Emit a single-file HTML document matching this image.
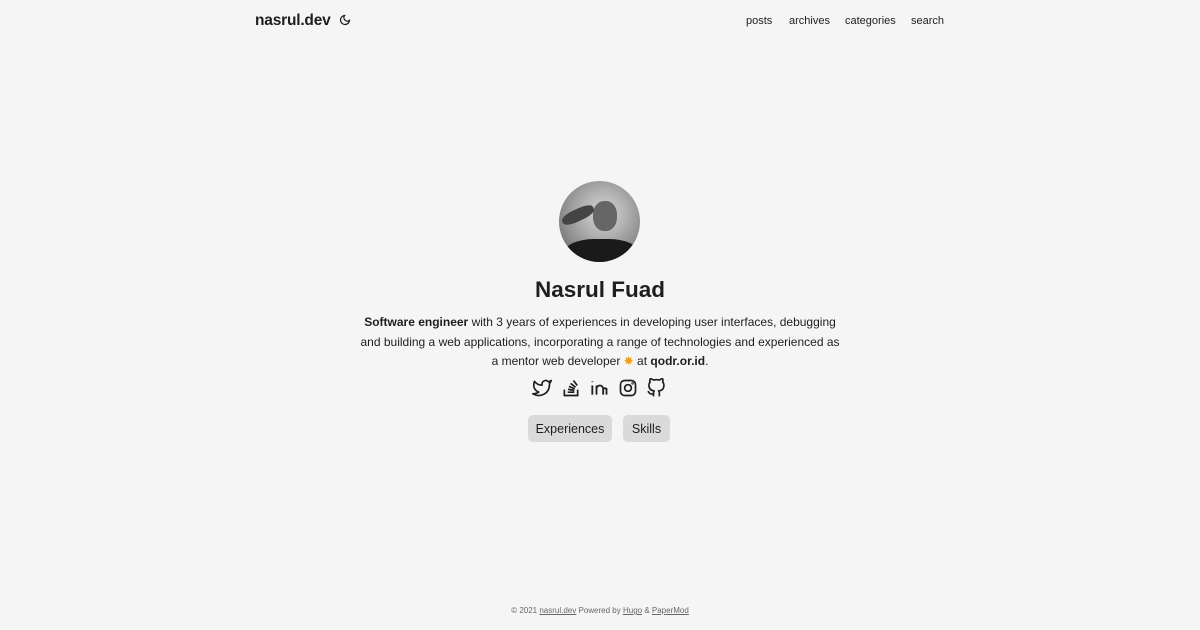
<!DOCTYPE html>
<html><head><meta charset="utf-8"><style>
*{margin:0;padding:0;box-sizing:border-box}
body{width:1200px;height:630px;background:#f5f5f5;font-family:"Liberation Sans",sans-serif;color:#1e1e1e;position:relative;overflow:hidden}
.logo{position:absolute;left:255px;top:12px;font-size:15.5px;font-weight:bold;color:#1e1e1e;letter-spacing:-0.2px}
.moon{position:absolute;left:339px;top:14px}
.nav{position:absolute;top:15px;font-size:11px;color:#1e1e1e}
.av{position:absolute;left:559px;top:181px;width:81px;height:81px;border-radius:50%;background:radial-gradient(circle at 55% 40%,#d8d8d8 0,#b0b0b0 35%,#909090 60%,#707070 80%);overflow:hidden}
h1{position:absolute;top:277px;left:0;width:1200px;text-align:center;font-size:22.5px;font-weight:bold;color:#1e1e1e}
p{position:absolute;top:313px;left:356px;width:488px;text-align:center;font-size:12px;line-height:19.5px;color:#1e1e1e}
.icons{position:absolute;top:378px;left:532px;display:flex;gap:8.5px}
.icons svg{width:20px;height:20px}
.btn{position:absolute;top:415px;height:27px;background:#dadada;border-radius:5px;font-size:12.5px;line-height:28px;text-align:center;color:#1e1e1e}
.foot{position:absolute;top:606px;left:0;width:1200px;text-align:center;font-size:8px;color:#666}
.foot u{text-decoration:underline}
</style></head><body>
<div class="logo">nasrul.dev</div>
<svg class="moon" width="12" height="12" viewBox="0 0 24 24" fill="none" stroke="#1e1e1e" stroke-width="2.5"><path d="M21 12.8A9 9 0 1 1 11.2 3 7 7 0 0 0 21 12.8z"/></svg>
<div class="nav" style="left:746px">posts</div>
<div class="nav" style="left:789px">archives</div>
<div class="nav" style="left:845px">categories</div>
<div class="nav" style="left:911px">search</div>
<div class="av"><div style="position:absolute;left:34px;top:20px;width:24px;height:30px;border-radius:45%;background:#666"></div><div style="position:absolute;left:2px;top:28px;width:34px;height:12px;border-radius:40%;background:#444;transform:rotate(-25deg)"></div><div style="position:absolute;left:5px;top:58px;width:75px;height:35px;border-radius:40%;background:#1a1a1a"></div></div>
<h1>Nasrul Fuad</h1>
<p><b>Software engineer</b> with 3 years of experiences in developing user interfaces, debugging and building a web applications, incorporating a range of technologies and experienced as a mentor web developer <span style="color:#f0a020">✸</span> at <b>qodr.or.id</b>.</p>
<div class="icons">
<svg viewBox="0 0 24 24" fill="none" stroke="#1e1e1e" stroke-width="2" stroke-linejoin="round"><path d="M23 3a10.9 10.9 0 0 1-3.14 1.53 4.48 4.48 0 0 0-7.86 3v1A10.66 10.66 0 0 1 3 4s-4 9 5 13a11.64 11.64 0 0 1-7 2c9 5 20 0 20-11.5a4.5 4.5 0 0 0-.08-.83A7.72 7.72 0 0 0 23 3z"/></svg>
<svg viewBox="0 0 24 24" fill="none" stroke="#1e1e1e" stroke-width="2"><path d="M4 14v7h16v-7M8 17h8M8.5 13.5l7.5 1.5M9.5 10l7 3M11.5 6.5l6 4.5M15 3l4.5 6"/></svg>
<svg viewBox="0 0 24 24" fill="none" stroke="#1e1e1e" stroke-width="2.2"><path d="M4 9v11M4 4v1M9 20v-11M9 13a4 4 0 0 1 8 0v7M17 13a4 4 0 0 1 4 0v7"/></svg>
<svg viewBox="0 0 24 24" fill="none" stroke="#1e1e1e" stroke-width="2"><rect x="3" y="3" width="18" height="18" rx="5"/><circle cx="12" cy="12" r="4"/><circle cx="17.5" cy="6.5" r=".5"/></svg>
<svg viewBox="0 0 24 24" fill="none" stroke="#1e1e1e" stroke-width="2" stroke-linejoin="round"><path d="M9 19c-5 1.5-5-2.5-7-3m14 6v-3.9a3.4 3.4 0 0 0-.9-2.6c3.1-.4 6.4-1.5 6.4-7A5.4 5.4 0 0 0 20 4.8 5 5 0 0 0 19.9 1S18.7.6 16 2.5a13.4 13.4 0 0 0-7 0C6.3.6 5.1 1 5.1 1A5 5 0 0 0 5 4.8a5.4 5.4 0 0 0-1.5 3.7c0 5.4 3.3 6.6 6.4 7A3.4 3.4 0 0 0 9 18.1V22"/></svg>
</div>
<div class="btn" style="left:528px;width:84px">Experiences</div>
<div class="btn" style="left:623px;width:47px">Skills</div>
<div class="foot">© 2021 <u>nasrul.dev</u> Powered by <u>Hugo</u> &amp; <u>PaperMod</u></div>
</body></html>
